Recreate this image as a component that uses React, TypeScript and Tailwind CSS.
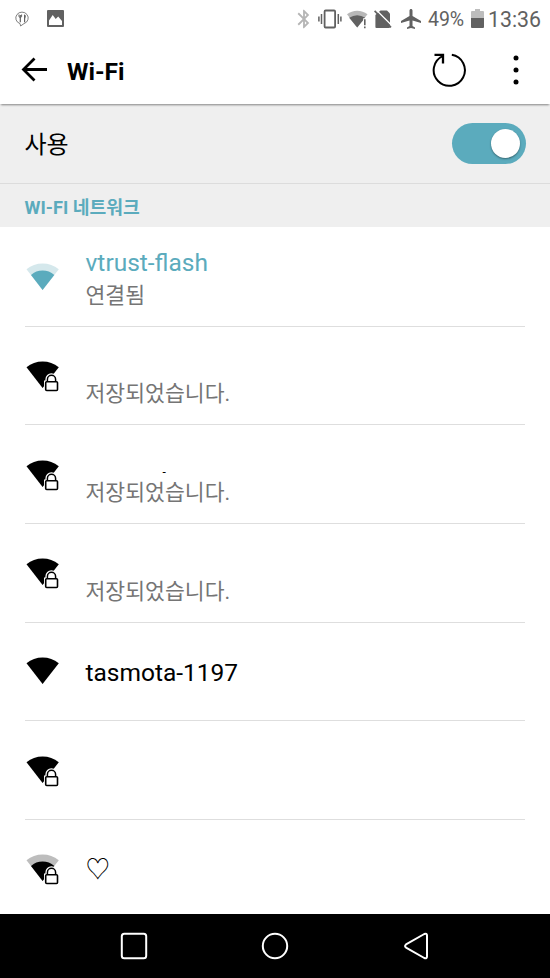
import React from "react";
import { MdAirplanemodeActive, MdBluetooth } from "react-icons/md";
import { clsx } from "clsx";

interface Network {
  id: number;
  name?: string;
  status?: string;
  connected?: boolean;
  secured?: boolean;
  weak?: boolean;
}

const networks: Network[] = [
  { id: 1, name: "vtrust-flash", status: "연결됨", connected: true, weak: true },
  { id: 2, status: "저장되었습니다.", secured: true },
  { id: 3, name: "-", status: "저장되었습니다.", secured: true },
  { id: 4, status: "저장되었습니다.", secured: true },
  { id: 5, name: "tasmota-1197" },
  { id: 6, secured: true },
  { id: 7, name: "♡", secured: true, weak: true },
];

const WifiIcon: React.FC<{ network: Network }> = ({ network }) => {
  const { connected, secured, weak } = network;
  const color = connected ? "#5babbd" : "#000";
  const faded = connected ? "#d5e8ec" : "#bdbdbd";

  return (
    <svg width="34" height="32" viewBox="0 0 34 32" className="shrink-0">
      <path d="M.5 6.2Q7.5.5 16.6.5T32.8 6.2L16.6 27Z" fill={weak ? faded : color} />
      {weak && <path d="M5 12Q10 7.6 16.6 7.6T28.3 12L16.6 27Z" fill={color} />}
      {secured && (
        <g>
          <path d="M18 31V19.4h1.4v-1.2a6 6 0 0 1 12 0v1.2H33V31Z" fill="#fff" />
          <path d="M21.4 21v-2.6a4.1 4.1 0 0 1 8.2 0V21" fill="none" stroke="#000" strokeWidth="1.5" />
          <rect x="19.7" y="20.8" width="11.8" height="8.7" rx="1" fill="#fff" stroke="#000" strokeWidth="1.6" />
        </g>
      )}
    </svg>
  );
};

const StatusBar = () => (
  <div className="flex h-[38px] items-center pl-[15px] pr-[9px] text-[#616161]">
    <svg width="15" height="16" viewBox="0 0 15 16" fill="none" stroke="currentColor" className="shrink-0">
      <path d="M5 12.6A6.2 5.9 0 1 1 9 12.6l-3.4 2.4Z" strokeWidth=".8" />
      <path d="M5.3 4v7.3M9.6 4v7.3" strokeWidth="1.2" />
      <path d="M4 3.5v2.3q1.3 1.4 2.6 0V3.5M9.6 3.6q1.5 1.2 0 4" strokeWidth="1" />
    </svg>
    <svg width="17" height="17" viewBox="0 0 17 17" className="mb-[2px] ml-[17px] shrink-0">
      <rect width="17" height="17" rx="1" fill="currentColor" />
      <path d="M2 15V10.5L5.7 5l3 4 2.5-2.4L15 11v4Z" fill="#fff" />
    </svg>

    <div className="ml-auto flex items-center">
      <MdBluetooth className="h-[22px] w-[22px] text-[#b5b5b5]" />
      <svg width="24" height="20" viewBox="0 0 24 20" fill="none" stroke="currentColor" className="mb-px ml-[3px]">
        <rect x="6.6" y="1.5" width="10.5" height="17" rx="1" strokeWidth="1.8" />
        <path d="M3.5 5v10M20.3 5v10" strokeWidth="1.5" />
        <path d="M.9 7.5v5M22.9 7.5v5" strokeWidth="1.5" />
      </svg>
      <svg width="21" height="19" viewBox="0 0 21 19" className="ml-[5px]">
        <path d="M0 4.3Q4.5.8 10.2.8T20.5 4.3L10.2 17.5Z" fill="#b8b8b8" />
        <path d="M2.2 7.8Q6 5.2 10.2 5.2T18.2 7.8L10.2 17.5Z" fill="currentColor" />
        <path d="M16.2 8.2h4V19h-4Z" fill="#fff" />
        <path d="M17.8 9.3v6M17.8 16.5v1.8" stroke="currentColor" strokeWidth="1.6" />
      </svg>
      <svg width="18" height="19" viewBox="0 0 18 19" className="ml-[6px]">
        <path d="M6.5.5H13L16 3.5V17q0 1-1 1H2.4q-1 0-1-1V5Z" fill="currentColor" />
        <path d="M2-.2 19 16.8" stroke="#fff" strokeWidth="1.4" />
        <path d="M.6.8 17 17.4" stroke="currentColor" strokeWidth="1.7" />
      </svg>
      <MdAirplanemodeActive className="ml-[7px] h-6 w-6" />
      <span className="ml-[5px] mt-[2px] w-[38px] text-[19.5px] leading-6">49%</span>
      <svg width="13" height="19" viewBox="0 0 13 19" className="mb-px ml-[5px]">
        <path d="M4 0h5v2h3q1 0 1 1v7H0V3q0-1 1-1h3Z" fill="#bdbdbd" />
        <path d="M0 9h13v9q0 1-1 1H1q-1 0-1-1Z" fill="currentColor" />
      </svg>
      <span className="ml-[4px] mt-px text-[21.3px] leading-6">13:36</span>
    </div>
  </div>
);

const Header = () => (
  <header className="relative flex h-[66px] items-center bg-white pl-[21px] pr-[31px] shadow-[0_2px_2px_-1px_rgba(0,0,0,0.45)]">
    <svg width="27" height="26" viewBox="0 0 27 26" fill="none" stroke="#000" strokeWidth="2.8" className="mb-[2px]">
      <path d="M13.5 1.5 2.5 12.5l11 11M2.5 12.5H26" />
    </svg>
    <h1 className="ml-[19px] mt-px text-[24.5px] font-bold leading-8">Wi-Fi</h1>
    <svg width="36" height="36" viewBox="0 0 36 36" fill="none" stroke="#000" strokeWidth="2" className="mb-[2px] ml-auto">
      <path d="M20.8 2.8A15.6 15.6 0 1 1 11.6 4.1" />
      <path d="M3.5 2.9h8.5v8.6" strokeWidth="2.3" />
    </svg>
    <svg width="6" height="30" viewBox="0 0 6 30" className="mb-[2px] ml-[46px]">
      <circle cx="3" cy="3" r="2.5" />
      <circle cx="3" cy="15" r="2.5" />
      <circle cx="3" cy="27" r="2.5" />
    </svg>
  </header>
);

const NetworkRow: React.FC<{ network: Network }> = ({ network }) => {
  const { name, status, connected } = network;

  return (
    <li className="mx-[25px] flex h-[98.6px] shrink-0 border-b border-[#dedede]">
      <div className="pl-px pt-[34.3px]">
        <WifiIcon network={network} />
      </div>
      <div className={clsx("ml-[25.5px] flex flex-col", status ? "pt-[18.5px]" : "pt-[34.3px]")}>
        <span
          className={clsx(
            "h-8 leading-8",
            connected ? "text-[#5babbd]" : "text-black",
            name === "-" ? "pl-[77px] pt-[12px] text-[12px]" : "text-[24.5px]"
          )}
        >
          {name}
        </span>
        {status && <span className="mt-px text-[21.6px] leading-8 text-[#757575]">{status}</span>}
      </div>
    </li>
  );
};

const NavBar = () => (
  <nav className="flex h-16 shrink-0 items-center justify-between bg-black pl-[120px] pr-[120px]">
    <svg width="28" height="28" viewBox="0 0 28 28" fill="none" stroke="#fff" strokeWidth="2">
      <rect x="1.8" y="1.8" width="24.4" height="24.4" rx="2.5" />
    </svg>
    <svg width="28" height="28" viewBox="0 0 28 28" fill="none" stroke="#fff" strokeWidth="2">
      <circle cx="14" cy="14" r="12.2" />
    </svg>
    <svg width="28" height="28" viewBox="0 0 28 28" fill="none" stroke="#fff" strokeWidth="2" strokeLinejoin="round">
      <path d="M4 12.4Q2.1 14 4 15.6L22.3 26Q25 27 25 24.5V3.5Q25 1 22.3 2Z" />
    </svg>
  </nav>
);

export default function App() {
  return (
    <div className="flex h-[978px] w-[550px] flex-col overflow-hidden bg-white font-['Roboto','Noto_Sans_CJK_KR',sans-serif] text-black">
      <StatusBar />
      <Header />

      <div className="flex h-20 shrink-0 items-center justify-between border-b border-[#dcdcdc] bg-[#efefef] px-[24.5px]">
        <span className="mt-[2px] text-[24px] leading-8">사용</span>
        <button className="flex h-[41px] w-[74px] items-center justify-end rounded-full bg-[#5babbd] pr-[6px]">
          <span className="h-[29px] w-[29px] rounded-full bg-white shadow-[0_1px_2px_rgba(0,0,0,0.4)]" />
        </button>
      </div>

      <div className="flex h-[43px] shrink-0 items-center bg-[#efefef] px-[24.5px] pt-[4px] text-[18.2px] text-[#5babbd]">
        <span className="whitespace-pre font-bold">WI-FI </span>
        <span className="font-bold">네트워크</span>
      </div>

      <ul className="flex min-h-0 flex-1 flex-col overflow-hidden pt-[1.3px]">
        {networks.map((network) => (
          <NetworkRow key={network.id} network={network} />
        ))}
      </ul>

      <NavBar />
    </div>
  );
}
